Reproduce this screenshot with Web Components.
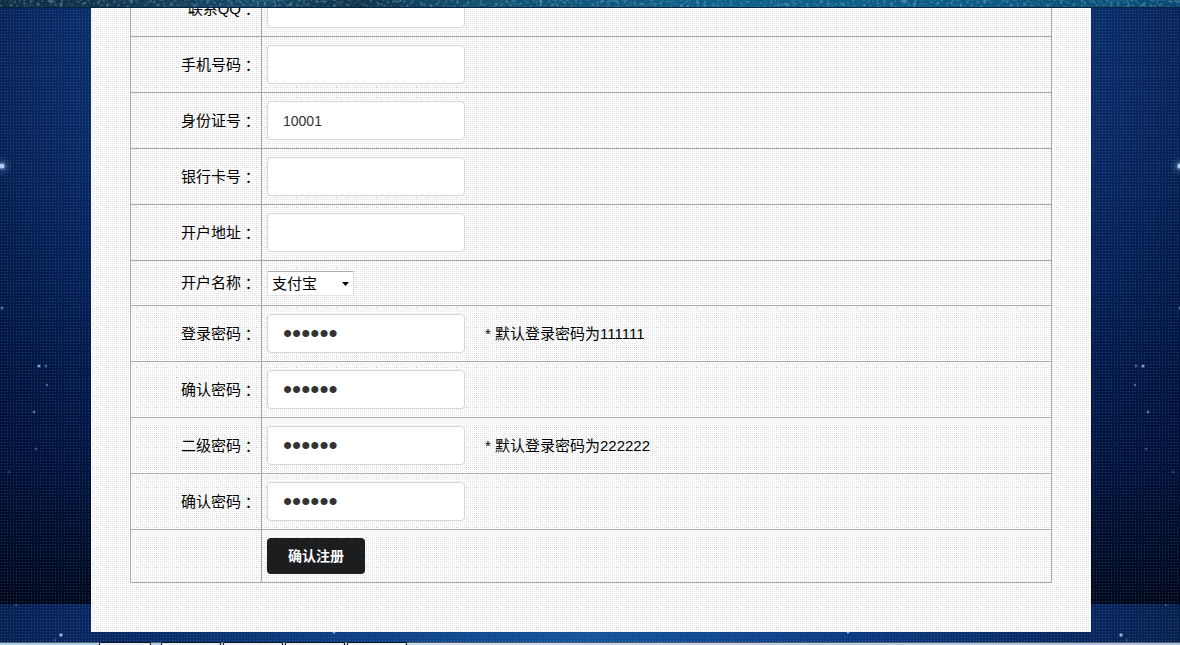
<!DOCTYPE html>
<html lang="zh-CN">
<head>
<meta charset="utf-8">
<meta name="viewport" content="width=device-width, initial-scale=1">
<title>会员注册</title>
<style>
html, body { margin: 0; height: 100%; overflow: hidden; background: #020d2b; }
body { font: 15px/20px "Liberation Sans", "Noto Sans CJK SC", sans-serif; color: #000; }
</style>
</head>
<body>
<register-page>
  <register-form>
    <form-row label="联系QQ"><text-field name="qq" label="联系QQ"></text-field></form-row>
    <form-row label="手机号码"><text-field name="phone" label="手机号码"></text-field></form-row>
    <form-row label="身份证号"><text-field name="idcard" label="身份证号" value="10001"></text-field></form-row>
    <form-row label="银行卡号"><text-field name="card" label="银行卡号"></text-field></form-row>
    <form-row label="开户地址"><text-field name="address" label="开户地址"></text-field></form-row>
    <form-row label="开户名称" class="short"><bank-select></bank-select></form-row>
    <form-row label="登录密码"><text-field name="pw1" label="登录密码" type="password" value="111111"></text-field><span>* 默认登录密码为111111</span></form-row>
    <form-row label="确认密码"><text-field name="pw1b" label="确认密码" type="password" value="111111"></text-field></form-row>
    <form-row label="二级密码"><text-field name="pw2" label="二级密码" type="password" value="222222"></text-field><span>* 默认登录密码为222222</span></form-row>
    <form-row label="确认密码"><text-field name="pw2b" label="确认密码" type="password" value="222222"></text-field></form-row>
    <form-row><submit-button>确认注册</submit-button></form-row>
  </register-form>
</register-page>

<script>
function define(name, html, setup) {
  const template = document.createElement('template');
  template.innerHTML = html;
  customElements.define(name, class extends HTMLElement {
    constructor() {
      super();
      this.attachShadow({ mode: 'open' }).append(template.content.cloneNode(true));
    }
    connectedCallback() { if (setup) setup(this, this.shadowRoot); }
  });
}

define('galaxy-strip', `
<style>
:host { display: block; height: 8px; background: linear-gradient(90deg, #102c42, #123a56 12%, #164a68 22%, #10324c 30%, #12506f 40%, #0f5f88 60%, #0d5c86 80%, #0b4a70); position: relative; z-index: 1; box-shadow: inset 0 -1px #062440; }
svg { display: block; width: 100%; height: 8px; }
</style>
<svg aria-hidden="true">
  <filter id="n" x="0" y="0" width="100%" height="100%">
    <feTurbulence type="fractalNoise" baseFrequency=".3" numOctaves="3" seed="4"/>
    <feColorMatrix values="0 0 0 0 .4  0 0 0 0 .7  0 0 0 0 .85  2.6 2.6 0 0 -2.6"/>
  </filter>
  <rect width="100%" height="7" filter="url(#n)" opacity=".35"/>
</svg>`);

define('star-field', `
<style>
:host { position: absolute; inset: 0; overflow: hidden; }
svg { position: absolute; top: 0; height: 100%; width: 110px; overflow: visible; }
.l { left: 0; }
.r { right: -2px; transform: scaleX(-1); }
.dots { position: absolute; inset: 0; background: conic-gradient(from 270deg at 1px 1px, rgba(110,150,220,.3) 90deg, transparent 0) 1px 2px / 3px 3px; }
</style>
<div class="dots"></div>
<svg class="l" aria-hidden="true"></svg>
<svg class="r" aria-hidden="true"></svg>`, (el, root) => {
  // x, y, radius, opacity
  const stars = [[2,158,9,.08],[2,158,5,.2],[2,158,2.6,1],[2,300,1.5,.5],[39,358,1.6,.75],[46,358,1.4,.4],
    [47,377,1.2,.45],[34,404,1.4,.5],[36,441,1.4,.3],[9,464,1.6,.2],[16,597,1,.4],[61,627,1.7,.85],[55,632,1.5,.2],[334,624,1.5,.8]];
  for (const svg of root.querySelectorAll('svg')) {
    svg.innerHTML = stars.map(([x, y, r, o]) =>
      `<circle cx="${x}" cy="${y}" r="${r}" fill="#a9cdf5" opacity="${o}"/>`).join('');
  }
});

define('register-page', `
<style>
:host { display: block; }
.stage {
  position: relative; overflow: hidden; padding: 0 0 10px 2px;
  background:
    linear-gradient(90deg, #082052, #0b3a7c 25%, #15549a 50%, #0c3a80 72%, #07204f) 0 596px / 100% 38px no-repeat,
    linear-gradient(90deg, rgba(0,0,20,.2), transparent 8%, transparent 92%, rgba(0,0,20,.2)),
    linear-gradient(#0b2f6c, #0a2c68 120px, #06235a 250px, #031b4c 360px, #02153f 460px, #010f2c 540px, #010a1d 596px);
}
main {
  position: relative; max-width: 1000px; margin: 0 auto; overflow: hidden;
  background:
    conic-gradient(from 270deg at 1px 1px, #b8b8b8 90deg, transparent 0) 5px 9px / 10px 10px,
    conic-gradient(from 270deg at 1px 1px, #e4e4e4 90deg, transparent 0) 1px 1px / 2px 2px #fff;
}
.content { margin: -28px 39px 0; padding-bottom: 49px; }
</style>
<galaxy-strip></galaxy-strip>
<div class="stage">
  <star-field></star-field>
  <main><div class="content"><slot></slot></div></main>
</div>
<task-bar></task-bar>`);

define('task-bar', `
<style>
:host { display: flex; gap: 2px; height: 3px; padding-left: 99px; border-top: 1px solid #59606c; background: linear-gradient(90deg, #a9cbee, #c6dcf4 40%, #a8bedc); box-sizing: border-box; }
i { width: 60px; margin-top: -1px; border: 1px solid #10141c; border-bottom: 0; border-radius: 2px 2px 0 0; box-sizing: border-box; background: #e8effa; }
i:first-of-type { width: 52px; margin-right: 8px; }
</style>
<i></i><i></i><i></i><i></i><i></i>`);

define('register-form', `
<style>
:host { display: block; }
form { border: solid #aaa; border-width: 0 1px 1px; }
</style>
<form onsubmit="return false"><slot></slot></form>`);

define('form-row', `
<style>
:host {
  display: grid; grid-template-columns: 131px 1fr; border-top: 1px solid #aaa;
  background: conic-gradient(from 270deg at 1px 1px, rgba(0,0,0,.02) 90deg, transparent 0) 0 0 / 2px 2px;
}
.name { display: flex; align-items: center; justify-content: flex-end; padding-right: 5px; border-right: 1px solid #aaa; }
.colon { font-family: "Noto Sans CJK TC", sans-serif; }
.value { display: flex; align-items: center; gap: 20px; padding: 8px 5px; }
:host(.short) .value { padding: 10px 5px 9px; }
</style>
<div class="name"></div>
<div class="value"><slot></slot></div>`, (el, root) => {
  const label = el.getAttribute('label');
  if (label) root.querySelector('.name').innerHTML = `<span>${label}</span><span class="colon" lang="zh-TW">：</span>`;
});

define('text-field', `
<style>
:host { display: block; }
input {
  display: block; box-sizing: border-box; width: 198px; height: 39px; margin: 0; padding: 0 15px;
  border: 1px solid #d6d6d6; border-radius: 4px; background: #fff; color: #333; outline: 0;
  font: 14px/20px "Liberation Sans", "Noto Sans CJK SC", sans-serif;
}
input[type=password] { font: 26px/36px "Liberation Sans", sans-serif; }
</style>
<input>`, (el, root) => {
  const input = root.querySelector('input');
  input.type = el.getAttribute('type') || 'text';
  input.name = el.getAttribute('name');
  input.value = el.getAttribute('value') || '';
  input.setAttribute('aria-label', el.getAttribute('label'));
});

define('bank-select', `
<style>
:host { display: block; position: relative; }
select {
  appearance: none; display: block; box-sizing: border-box; width: 87px; height: 25px; margin: 0; padding: 0 20px 0 4px;
  border: 1px solid #e2e3ea; border-top-color: #abadb3; border-radius: 1px; background: #fff; color: #000;
  font: 15px/20px "Liberation Sans", "Noto Sans CJK SC", sans-serif;
}
svg { position: absolute; right: 5px; top: 11px; pointer-events: none; }
</style>
<select aria-label="开户名称"><option>支付宝</option><option>微信</option></select>
<svg width="7" height="4" viewBox="0 0 7 4" aria-hidden="true"><path d="M0 0h7L3.5 4z"/></svg>`);

define('submit-button', `
<style>
:host { display: block; }
button {
  display: block; height: 36px; margin: 0; padding: 0 21px; border: 0; border-radius: 4px; background: #1b1d1f; color: #fff;
  font: bold 14px/20px "Liberation Sans", "Noto Sans CJK SC", sans-serif;
}
</style>
<button type="submit"><slot></slot></button>`);
</script>
</body>
</html>
